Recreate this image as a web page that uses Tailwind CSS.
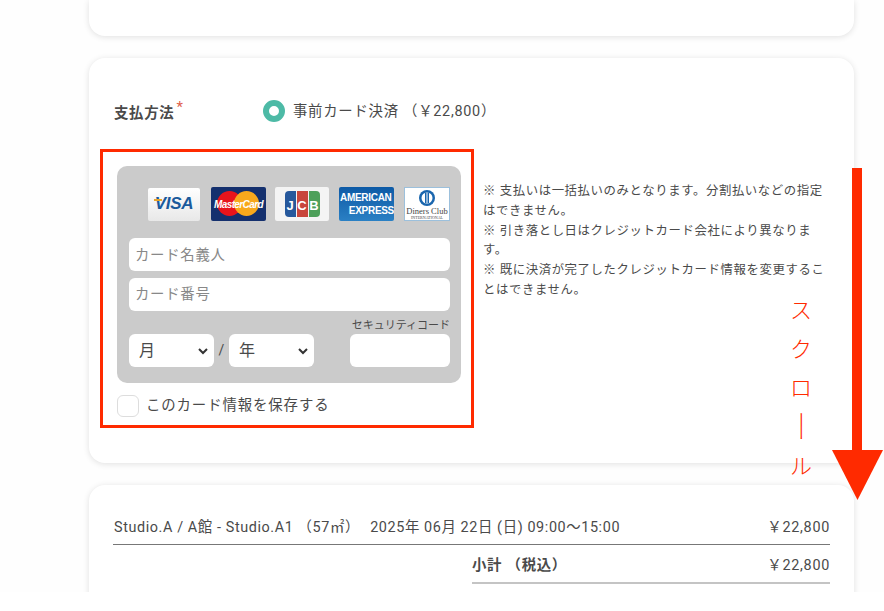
<!DOCTYPE html>
<html lang="ja">
<head>
  <meta charset="UTF-8">
  <title>支払方法</title>
  <script src="https://cdn.jsdelivr.net/npm/@tailwindcss/browser@4"></script>
</head>
<body class="bg-white font-['Roboto','Noto_Sans_CJK_JP',sans-serif] text-[#4a4a4a] text-[14.4px] tracking-[0.72px]">
  <div class="relative w-[884px] h-[611px] overflow-hidden">
    <div class="h-[592px] overflow-hidden bg-[#fefefe] flex flex-col gap-[22px] pl-[89px] pr-[30px]">
      <!-- previous card, cut off at the top -->
      <div class="h-[36px] shrink-0 bg-white rounded-b-2xl shadow-[0_1px_6px_rgba(0,0,0,0.12)]"></div>

      <!-- payment card -->
      <section class="h-[405px] shrink-0 bg-white rounded-2xl shadow-[0_1px_6px_rgba(0,0,0,0.12)] pt-[42px] pl-[24px]">
        <div class="flex items-center h-[22px]">
          <div class="w-[150px] pl-[1px] font-bold relative top-[2px]">支払方法<span class="relative -top-[6px] text-[#e0604c] font-normal text-[15px] ml-[2px]">*</span></div>
          <span class="w-[22px] h-[22px] rounded-full border-[6px] border-[#4dbaa6] bg-white"></span>
          <span class="ml-[8px] relative top-[1px]">事前カード決済 （￥22,800）</span>
        </div>

        <div class="flex mt-[44px]">
          <div class="w-[348px] shrink-0">
            <div class="w-[344px] ml-[4px] h-[217px] bg-[#cbcbcb] rounded-[10px] pt-[21px] pl-[12px] pr-[11px] tracking-normal">
              <!-- card brands -->
              <div class="flex justify-end items-center h-[34px]">
                <div class="relative w-[52px] h-[33px] rounded-[2px] bg-gradient-to-b from-white to-[#e8e8e8] flex items-center justify-center text-[#1a5a9c] font-['Liberation_Sans'] font-bold italic text-[17px] tracking-[-0.3px]">
                  <span class="absolute left-[6px] top-[11px] w-[8px] h-[2px] bg-[#e8a52c]"></span>VISA
                </div>
                <div class="relative w-[55px] h-[34px] ml-[11px] rounded-[2px] bg-[#14306e] overflow-hidden">
                  <span class="absolute left-[6px] top-[4px] w-[25px] h-[25px] rounded-full bg-[#e8141c]"></span>
                  <span class="absolute left-[23px] top-[4px] w-[25px] h-[25px] rounded-full bg-[#f8a81c]"></span>
                  <span class="absolute inset-0 flex items-center justify-center text-white font-['Liberation_Sans'] font-bold italic text-[10px] tracking-[-0.6px]">MasterCard</span>
                </div>
                <div class="w-[54px] h-[34px] ml-[9px] rounded-[2px] bg-[#f4f4f4] flex items-center justify-center">
                  <div class="flex h-[26px] gap-[1px] font-['Liberation_Sans'] font-bold text-white text-[13px] leading-[30px] text-center">
                    <span class="w-[11px] rounded-l-[4px] bg-[#26589c]">J</span>
                    <span class="w-[11px] bg-[#c8463c]">C</span>
                    <span class="w-[11px] rounded-r-[4px] bg-[#4da05a]">B</span>
                  </div>
                </div>
                <div class="w-[55px] h-[34px] ml-[10px] rounded-[2px] bg-gradient-to-b from-[#0d5aa6] to-[#2a80c4] flex flex-col justify-center text-white font-['Liberation_Sans'] font-bold text-[10px] leading-[13px] tracking-[-0.3px] overflow-hidden">
                  <span class="text-left ml-[1px]">AMERICAN</span>
                  <span class="text-right">EXPRESS</span>
                </div>
                <div class="w-[46px] h-[34px] ml-[10px] bg-white border border-[#9cc0dc] flex flex-col items-center pt-[1px] font-['Liberation_Serif'] text-[#444]">
                  <svg width="18" height="18" viewBox="0 0 18 18">
                    <circle cx="9" cy="9" r="8" fill="#1a66ae"/>
                    <circle cx="9" cy="9" r="5.5" fill="#fff"/>
                    <rect x="7" y="4" width="1.5" height="10" fill="#1a66ae"/>
                    <rect x="9.5" y="4" width="1.5" height="10" fill="#1a66ae"/>
                  </svg>
                  <span class="text-[8.5px] leading-[8px] whitespace-nowrap">Diners Club</span>
                  <span class="text-[4px] leading-[5px] whitespace-nowrap">INTERNATIONAL</span>
                </div>
              </div>

              <input placeholder="カード名義人" class="block w-full h-[33px] mt-[17px] px-[6px] pt-[1px] bg-white rounded-[6px] tracking-[0.72px] placeholder:text-[#888]">
              <input placeholder="カード番号" class="block w-full h-[33px] mt-[7px] px-[6px] bg-white rounded-[6px] tracking-[0.72px] placeholder:text-[#888]">

              <div class="flex items-end mt-[6px]">
                <div class="flex items-center h-[33px]">
                  <div class="w-[85px] h-[33px] bg-white rounded-[6px] flex items-center justify-between pl-[10px] pr-[5px] text-[16px]">月
                    <svg width="12" height="12" viewBox="0 0 12 12" fill="none" stroke="#333" stroke-width="2"><path d="M2 4l4 4 4-4"/></svg>
                  </div>
                  <span class="w-[15px] text-center text-[14px]">/</span>
                  <div class="w-[85px] h-[33px] bg-white rounded-[6px] flex items-center justify-between pl-[10px] pr-[5px] text-[16px]">年
                    <svg width="12" height="12" viewBox="0 0 12 12" fill="none" stroke="#333" stroke-width="2"><path d="M2 4l4 4 4-4"/></svg>
                  </div>
                </div>
                <div class="ml-auto w-[100px]">
                  <div class="text-[11px] leading-[17px] text-right whitespace-nowrap">セキュリティコード</div>
                  <div class="h-[33px] bg-white rounded-[6px]"></div>
                </div>
              </div>
            </div>
            <label class="flex items-center mt-[12px] ml-[4px] tracking-[0.9px]">
              <span class="w-[22px] h-[22px] bg-white border border-[#ddd] rounded-[6px]"></span>
              <span class="ml-[7px]">このカード情報を保存する</span>
            </label>
          </div>
          <div class="w-[346px] ml-[22px] mt-[15px] text-[12.4px] tracking-[0.6px] leading-[19.8px]">
            <p>※ 支払いは一括払いのみとなります。分割払いなどの指定はできません。</p>
            <p>※ 引き落とし日はクレジットカード会社により異なります。</p>
            <p>※ 既に決済が完了したクレジットカード情報を変更するこ</p>
            <p class="w-fit">とはできません。</p>
          </div>
        </div>
      </section>

      <!-- summary card -->
      <section class="h-[200px] shrink-0 bg-white rounded-2xl shadow-[0_1px_6px_rgba(0,0,0,0.12)] pt-[31px] px-[24px]">
        <div class="flex justify-between h-[29px] border-b border-[#777] leading-[24px]">
          <div class="tracking-[0.6px] pl-[1px]">
            <span>Studio.A / A館 - Studio.A1 （57㎡）</span>
            <span class="ml-[6px]">2025年 06月 22日 (日) 09:00～15:00</span>
          </div>
          <span>￥22,800</span>
        </div>
        <div class="flex justify-between ml-[359px] h-[39px] border-b-2 border-[#c4c4c4] leading-[41px]">
          <span class="font-bold">小計 （税込）</span>
          <span>￥22,800</span>
        </div>
      </section>
    </div>

    <!-- annotations drawn over the screenshot -->
    <div class="absolute left-[100px] top-[149px] w-[374px] h-[279px] border-[3px] border-[#ff2a00]"></div>
    <div class="absolute left-[852px] top-[168px] w-[10px] h-[285px] bg-[#ff2a00]"></div>
    <svg class="absolute left-[832px] top-[450px]" width="51" height="50" viewBox="0 0 51 50"><path d="M0 0h51L25.5 50z" fill="#ff2a00"/></svg>
    <div class="absolute left-[787px] top-[301px] w-[28px] flex flex-col items-center gap-[24px] text-[#ff2a00] font-['Noto_Sans_CJK_JP'] font-light tracking-normal text-[22px] leading-[15px]">
      <span>ス</span><span>ク</span><span>ロ</span><span class="[writing-mode:vertical-rl] h-[15px] flex items-center justify-center scale-y-[1.5]">ー</span><span>ル</span>
    </div>
  </div>
</body>
</html>
